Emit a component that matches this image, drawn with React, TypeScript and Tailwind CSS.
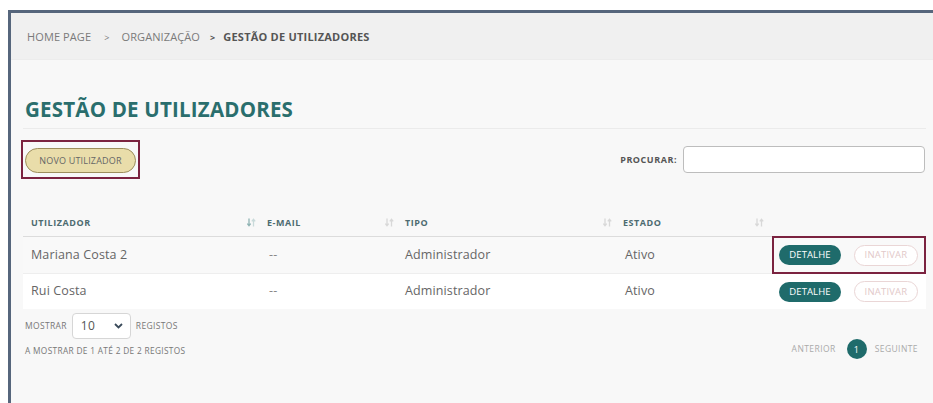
import React from "react";

const font = { fontFamily: '"Open Sans", "Noto Sans", sans-serif' };

function SortIcon({ active = false }: { active?: boolean }) {
  const down = active ? "#8fb3b3" : "#d8d8d8";
  const up = active ? "#c9dada" : "#d8d8d8";
  return (
    <svg width="9" height="9" viewBox="0 0 9 9" className="shrink-0">
      <path d="M2 0.5v7M0.3 5.6L2 7.8L3.7 5.6" stroke={down} strokeWidth="1.3" fill="none" />
      <path d="M6.5 8.5v-7M4.8 3.4L6.5 1.2L8.2 3.4" stroke={up} strokeWidth="1.3" fill="none" />
    </svg>
  );
}

type Row = { name: string; email: string; tipo: string; estado: string };

const rows: Row[] = [
  { name: "Mariana Costa 2", email: "--", tipo: "Administrador", estado: "Ativo" },
  { name: "Rui Costa", email: "--", tipo: "Administrador", estado: "Ativo" },
];

const cols = ["w-[236px]", "w-[138px]", "w-[218px]", "w-[152px]"];

function HeaderCell({ label, width, active }: { label: string; width: string; active?: boolean }) {
  return (
    <div className={`${width} flex items-center justify-between pl-2 pr-[3px]`}>
      <span className="text-[9px] font-bold tracking-[0.06em] text-[#4d6b70]">{label}</span>
      <SortIcon active={active} />
    </div>
  );
}

export default function App() {
  return (
    <div className="w-[933px] h-[403px] overflow-hidden bg-white pt-[10px] pl-[8px]" style={font}>
      <div className="w-[940px] h-[400px] border-l-[3px] border-t-[3px] border-[#56667c] bg-[#f8f8f8]">
        {/* breadcrumb */}
        <div className="h-[47px] bg-[#f0f0f0] flex items-center pl-[16px] pt-[3px] text-[11px] tracking-[0.01em] text-[#7a7a7a] border-b border-[#ececec]">
          <span>HOME PAGE</span>
          <span className="ml-[13px] mr-[12px] text-[9px]">&gt;</span>
          <span>ORGANIZAÇÃO</span>
          <span className="ml-[10px] mr-[8px] text-[9px] font-bold text-[#555]">&gt;</span>
          <span className="font-bold text-[#555] tracking-[0.02em]">GESTÃO DE UTILIZADORES</span>
        </div>

        <div className="w-[915px] pl-[12px]">
          {/* title */}
          <div className="pt-[35px] pb-[5px] border-b border-[#ebebeb]">
            <h1 className="text-[20.5px] leading-[28px] font-bold text-[#2a6e6d] pl-[2px] tracking-[0.01em]">
              GESTÃO DE UTILIZADORES
            </h1>
          </div>

          {/* toolbar */}
          <div className="flex items-center justify-between mt-[11px]">
            <div className="border-2 border-[#7b2340] px-[2px] py-[4px] -ml-[2px]">
              <button className="h-[25px] w-[111px] rounded-full bg-[#e9ddaa] border border-[#9d8e5c] text-[9px] text-[#666] tracking-[0.02em]">
                NOVO UTILIZADOR
              </button>
            </div>
            <div className="flex items-center gap-[6px] pr-[1px]">
              <span className="text-[9px] font-bold tracking-[0.06em] text-[#555]">PROCURAR:</span>
              <div className="w-[242px] h-[27px] bg-white border border-[#bdbdbd] rounded-[4px]" />
            </div>
          </div>

          {/* table */}
          <div className="mt-[32px]">
            <div className="flex h-[26px] items-center border-b border-[#dcdcdc] pb-[2px]">
              <HeaderCell label="UTILIZADOR" width={cols[0]} active />
              <HeaderCell label="E-MAIL" width={cols[1]} />
              <HeaderCell label="TIPO" width={cols[2]} />
              <HeaderCell label="ESTADO" width={cols[3]} />
              <div className="flex-1" />
            </div>
            {rows.map((r, i) => (
              <div
                key={r.name}
                className={`flex h-[36px] items-center text-[12.5px] text-[#666] tracking-[0.01em] ${
                  i === 1 ? "bg-white border-t border-[#eeeeee]" : "bg-[#f9f9f9]"
                }`}
              >
                <div className={`${cols[0]} pl-2`}>{r.name}</div>
                <div className={`${cols[1]} pl-[10px] text-[#888]`}>{r.email}</div>
                <div className={`${cols[2]} pl-2`}>{r.tipo}</div>
                <div className={`${cols[3]} pl-[10px]`}>{r.estado}</div>
                <div className="flex-1 flex justify-end">
                  <div
                    className={`flex items-center gap-[13px] h-[38px] pl-[5px] pr-[6px] border-2 ${
                      i === 0 ? "border-[#7b2340]" : "border-transparent"
                    }`}
                  >
                    <button className="h-[20px] w-[62px] rounded-full bg-[#1f6b6b] text-white text-[9.5px] tracking-[0.01em]">
                      DETALHE
                    </button>
                    <button className="h-[21px] w-[64px] rounded-full border border-[#ead6d6] bg-white text-[9.5px] text-[#e2c9c9] tracking-[0.02em]">
                      INATIVAR
                    </button>
                  </div>
                </div>
              </div>
            ))}
          </div>

          {/* footer */}
          <div className="flex justify-between mt-[4px]">
            <div>
              <div className="flex items-center text-[8.5px] text-[#777] tracking-[0.04em]">
                <span className="pl-[2px]">MOSTRAR</span>
                <div className="ml-[5px] w-[59px] h-[26px] bg-white border border-[#d6d6d6] rounded-[4px] flex items-center justify-between pl-[8px] pr-[7px]">
                  <span className="text-[12px] text-[#555]">10</span>
                  <svg width="9" height="6" viewBox="0 0 9 6">
                    <path d="M1 1l3.5 3.5L8 1" stroke="#3a4a5a" strokeWidth="1.8" fill="none" />
                  </svg>
                </div>
                <span className="ml-[5px]">REGISTOS</span>
              </div>
              <div className="mt-[6px] text-[8.3px] text-[#777] tracking-[0.04em] pl-[2px]">
                A MOSTRAR DE 1 ATÉ 2 DE 2 REGISTOS
              </div>
            </div>
            <div className="flex items-center mt-[26px] h-[20px] pr-[8px] text-[8.5px] text-[#aaa] tracking-[0.05em]">
              <span>ANTERIOR</span>
              <span className="ml-[11px] mr-[8px] w-[20px] h-[20px] rounded-full bg-[#1f6b6b] text-white flex items-center justify-center text-[9px]">
                1
              </span>
              <span>SEGUINTE</span>
            </div>
          </div>
        </div>
      </div>
    </div>
  );
}
